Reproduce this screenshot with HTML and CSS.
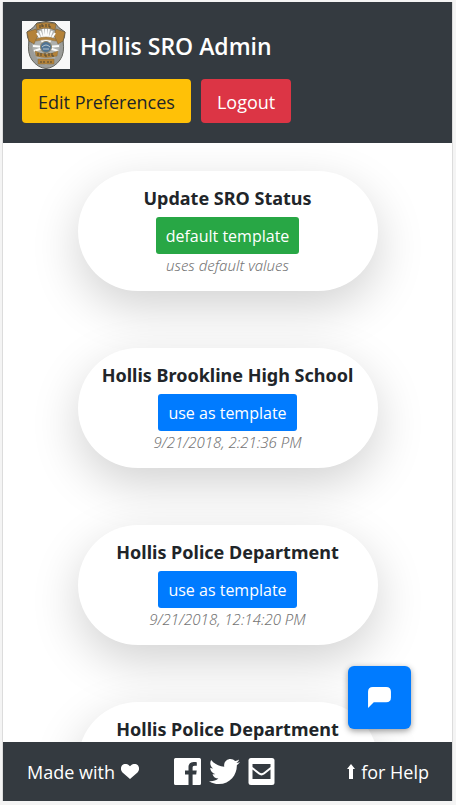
FILE: index.html
```html
<!DOCTYPE html>
<html lang="en">
<head>
<meta charset="utf-8">
<meta name="viewport" content="width=device-width, initial-scale=1">
<title>Hollis SRO Admin</title>
<link rel="stylesheet" href="styles.css">
</head>
<body>
<div class="app">
  <header class="header">
    <div class="brand">
      <svg class="badge" viewBox="0 0 48 48" role="img" aria-label="Hollis Police badge">
        <rect width="48" height="48" fill="#f8f8f8"/>
        <path d="M15 2 Q24 -1 33 2 Q36 7 43 11 Q43 16 41 20 Q43 40 24 47.500 Q5 40 7 20 Q5 16 5 11 Q12 7 15 2Z" fill="#9b9c99" stroke="#55554f"/>
        <path d="M7 20 Q5 32 10 39 Q16 47 24 47.500 Q32 47 38 39 Q43 32 41 20Z" fill="#9b9c99" stroke="#66665f"/>
        <path d="M24 6 Q36 8 38 20 Q39 36 24 44 Q9 36 10 20 Q12 8 24 6Z" fill="#aeb0ae"/>
        <path d="M14 3 Q24 0 34 3 L33 9 Q24 5 15 9Z M5 11 L14 8 L16 14 L12 23 L7 20Z M43 11 L34 8 L32 14 L36 23 L41 20Z" fill="#b48239" stroke="#786039" stroke-width=".6"/>
        <path d="M24 26 L15 12M24 26 L18 10M24 26 L21 8M24 26 V8M24 26 L27 8M24 26 L30 10M24 26 L33 12M24 26 L11 25M24 26 L37 25M24 26 L12 30M24 26 L36 30" stroke="#fbfbfa" stroke-width="2"/>
        <path d="M14 18 Q24 14 34 18 V20 Q24 17 14 20Z M13 30 Q24 36 36 30 L35 35 Q24 38 14 35Z M16 38 H32 V43 H16Z" fill="#b48239" stroke="#8a6c3c" stroke-width=".5"/>
        <circle cx="24" cy="26" r="5.500" fill="#4f7394" stroke="#8e8468"/>
        <path d="M20 26 Q24 22 28 26 M21 28 H27" fill="none" stroke="#b9c7cf"/>
        <path d="M18 4v3m2-1V3m0 2h2m2-2v3m3-3v3h2M16 32v3m3-3v3m4-3v3h2m2-3v3m3-3v3h2M19 40v2m3-2v2m4-2v2m3-2v2" fill="none" stroke="#4d4535"/>
      </svg>
      <h1 class="title">Hollis SRO Admin</h1>
    </div>
    <div class="actions">
      <button class="btn btn-warning" type="button">Edit Preferences</button>
      <button class="btn btn-danger" type="button">Logout</button>
    </div>
  </header>

  <main class="content">
    <section class="card">
      <h2 class="card-title">Update SRO Status</h2>
      <button class="btn btn-sm btn-success" type="button">default template</button>
      <p class="note">uses default values</p>
    </section>
    <section class="card">
      <h2 class="card-title">Hollis Brookline High School</h2>
      <button class="btn btn-sm btn-primary" type="button">use as template</button>
      <p class="note">9/21/2018, 2:21:36 PM</p>
    </section>
    <section class="card">
      <h2 class="card-title">Hollis Police Department</h2>
      <button class="btn btn-sm btn-primary" type="button">use as template</button>
      <p class="note">9/21/2018, 12:14:20 PM</p>
    </section>
    <section class="card">
      <h2 class="card-title">Hollis Police Department</h2>
    </section>
    <button class="chat" type="button" aria-label="Chat">
      <svg class="chat-icon" viewBox="0 0 24 22" fill="#fff"><path d="M5 0H19Q24 0 24 5V11Q24 16 19 16H6L0 22V5Q0 0 5 0Z"/></svg>
    </button>
  </main>

  <footer class="footer">
    <span class="made">Made with
      <svg class="heart" viewBox="0 0 18 15" fill="#fff" role="img" aria-label="love"><path d="M9 15 L1.500 8.400C-.9 6-.3 2.200 1.800.700C4.200-.900 7.200.100 9 2.300C10.800.100 13.800-.900 16.200.700C18.300 2.200 18.900 6 16.500 8.400Z"/></svg>
    </span>
    <nav class="social" aria-label="Contact">
      <a class="social-link" href="#facebook" aria-label="Facebook">
        <svg class="square-icon" viewBox="0 0 27 27" fill="#fff"><path d="M1.500 0H25.500Q27 0 27 1.500V25.500Q27 27 25.500 27H18.600V16.500H22.200L22.700 12.400H18.600V9.800C18.600 8.600 19 7.800 20.700 7.800H22.800V4.200C22.400 4.100 21.200 4 19.700 4C16.500 4 14.500 5.900 14.500 9.300V12.400H11V16.500H14.500V27H1.500Q0 27 0 25.500V1.500Q0 0 1.500 0Z"/></svg>
      </a>
      <a class="social-link" href="#twitter" aria-label="Twitter">
        <svg class="bird-icon" viewBox="0 0 512 512" fill="#fff"><path d="M459.370 151.716c.325 4.548.325 9.097.325 13.645 0 138.720-105.583 298.558-298.558 298.558-59.452 0-114.680-17.219-161.137-47.106 8.447.974 16.568 1.299 25.340 1.299 49.055 0 94.213-16.568 130.274-44.832-46.132-.975-84.792-31.188-98.112-72.772 6.498.974 12.995 1.624 19.818 1.624 9.421 0 18.843-1.300 27.614-3.573-48.081-9.747-84.143-51.980-84.143-102.985v-1.299c13.969 7.797 30.214 12.670 47.431 13.319-28.264-18.843-46.781-51.005-46.781-87.391 0-19.492 5.197-37.360 14.294-52.954 51.655 63.675 129.300 105.258 216.365 109.807-1.624-7.797-2.599-15.918-2.599-24.040 0-57.828 46.782-104.934 104.934-104.934 30.213 0 57.502 12.670 76.670 33.137 23.715-4.548 46.456-13.320 66.599-25.340-7.798 24.366-24.366 44.833-46.132 57.827 21.117-2.273 41.584-8.122 60.426-16.243-14.292 20.791-32.161 39.308-52.628 54.253z"/></svg>
      </a>
      <a class="social-link" href="#email" aria-label="Email">
        <svg class="square-icon" viewBox="0 0 27 27"><rect x=".5" width="26" height="27" rx="2.500" fill="#fff"/><path d="M4.500 6H22.500V9L15.500 14.500Q13.500 16 11.500 14.500L4.500 9ZM4.500 11.500L10.500 16.300Q13.500 18.500 16.500 16.300L22.500 11.500V21H4.500Z" fill="#343a40"/></svg>
      </a>
    </nav>
    <span class="help">
      <svg class="arrow" viewBox="0 0 8 16" fill="#fff" aria-hidden="true"><path d="M4 0L8 5H6V15H2V5H0Z"/></svg>
      for Help
    </span>
  </footer>
</div>
</body>
</html>
```
FILE: styles.css
```css
* {
  box-sizing: border-box;
}

body {
  margin: 0;
  padding: 2px 3px 4px 2px;
  height: 100vh;
  background: #f4f4f4;
  color: #212529;
  font-family: "Segoe UI", "Open Sans", "Noto Sans", sans-serif;
  font-size: 18px;
}

.app {
  display: flex;
  flex-direction: column;
  height: 100%;
  border: 0 solid #dcdcdc;
  border-width: 0 1px;
  background: #fff;
}

h1,
h2,
p {
  margin: 0;
}

.header {
  display: flex;
  flex-direction: column;
  gap: 10px;
  padding: 19px 19px 20px;
  background: #343a40;
  color: #fff;
}

.brand {
  display: flex;
  align-items: center;
  gap: 10px;
}

.badge {
  width: 48px;
  height: 48px;
}

.title {
  padding-top: 2px;
  font-size: 23px;
  font-weight: 600;
  line-height: 32px;
}

.actions {
  display: flex;
  gap: 10px;
}

.btn {
  padding: 2px 16px 0;
  border: 0;
  border-radius: 4px;
  color: #fff;
  font-family: inherit;
  font-size: 18px;
  line-height: 42px;
  white-space: nowrap;
}

.btn-sm {
  padding: 1px 10px 0;
  border-radius: 3px;
  font-size: 16px;
  line-height: 36px;
}

.btn-warning {
  background: #ffc107;
  color: #212529;
}

.btn-danger {
  background: #dc3545;
}

.btn-success {
  background: #28a745;
}

.btn-primary {
  background: #007bff;
}

.content {
  position: relative;
  display: flex;
  flex: 1;
  flex-direction: column;
  align-items: center;
  gap: 57px;
  min-height: 0;
  padding-top: 28px;
  overflow: hidden;
}

.card {
  display: flex;
  flex: none;
  flex-direction: column;
  align-items: center;
  width: 300px;
  min-height: 120px;
  padding: 14px 0;
  border-radius: 60px;
  background: #fff;
  box-shadow: 0 16px 48px rgba(0, 0, 0, 0.18);
}

.card-title {
  margin-bottom: 6px;
  font-family: "Segoe UI", "Noto Sans", "Open Sans", sans-serif;
  font-size: 18px;
  font-weight: 700;
  line-height: 26px;
}

.note {
  color: #757575;
  font-family: "Segoe UI", "Noto Sans", "Open Sans", sans-serif;
  font-size: 15px;
  font-style: italic;
  font-weight: 300;
  line-height: 22px;
}

.chat {
  position: absolute;
  right: 41px;
  bottom: 13px;
  display: flex;
  align-items: center;
  justify-content: center;
  width: 63px;
  height: 63px;
  padding: 0;
  border: 0;
  border-radius: 6px;
  background: #007bff;
  box-shadow: 0 2px 6px rgba(0, 0, 0, 0.4);
}

.chat-icon {
  width: 23px;
  height: 21px;
}

.footer {
  display: flex;
  align-items: center;
  gap: 35px;
  height: 59px;
  padding: 0 23px 0 24px;
  background: #343a40;
  color: #fff;
  line-height: 28px;
}

.made,
.help {
  display: flex;
  align-items: center;
  gap: 6px;
}

.help {
  margin-left: auto;
}

.heart {
  width: 18px;
  height: 15px;
}

.arrow {
  width: 8px;
  height: 16px;
}

.social {
  display: flex;
  align-items: center;
  gap: 8px;
}

.social-link {
  display: flex;
}

.square-icon {
  width: 27px;
  height: 27px;
}

.bird-icon {
  width: 31px;
  height: 31px;
}
```
